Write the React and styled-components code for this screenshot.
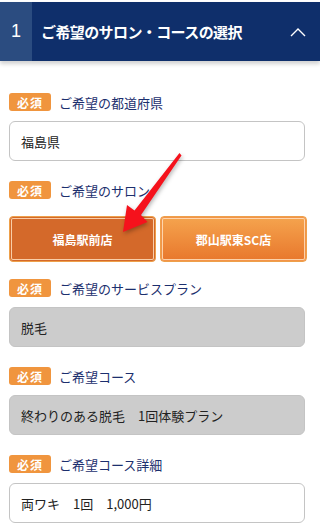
import React from "react";
import styled, { createGlobalStyle } from "styled-components";

const GlobalStyle = createGlobalStyle`
  html, body {
    margin: 0;
    padding: 0;
    background: #fff;
  }
  body {
    font-family: "Noto Sans CJK JP", "Noto Sans", sans-serif;
    width: 320px;
    overflow: hidden;
  }
`;

const Page = styled.div`
  position: relative;
  width: 320px;
  height: 529px;
  overflow: hidden;
  padding-top: 2px;
  box-sizing: border-box;
`;

const Header = styled.div`
  display: flex;
  height: 59px;
  background: #0f2f6b;
  box-shadow: 0 3px 4px rgba(0, 0, 0, 0.18);
  color: #fff;
`;

const StepNo = styled.div`
  width: 32px;
  display: flex;
  align-items: center;
  justify-content: center;
  background: #2b4c80;
  font-family: "Liberation Sans", sans-serif;
  font-size: 18px;
`;

const Title = styled.div`
  flex: 1;
  display: flex;
  align-items: center;
  padding-left: 9px;
  font-size: 15px;
  font-weight: bold;
  letter-spacing: -0.6px;
`;

const Chevron = styled.div`
  width: 40px;
  display: flex;
  align-items: center;
  justify-content: center;
  padding-right: 2px;
`;

const Form = styled.div`
  padding: 32px 15px 0 9px;
`;

const Field = styled.div`
  margin-bottom: ${(p) => (p.$tight ? "17px" : "20px")};
`;

const LabelRow = styled.div`
  display: flex;
  align-items: center;
  gap: 8px;
  height: 18px;
  margin-bottom: ${(p) => (p.$gap ? `${p.$gap}px` : "10px")};
`;

const Badge = styled.span`
  display: inline-flex;
  align-items: center;
  justify-content: center;
  width: 42px;
  height: 18px;
  border-radius: 3px;
  background: #f0953e;
  color: #fff;
  font-size: 12px;
  font-weight: bold;
  letter-spacing: 1px;
`;

const Label = styled.span`
  color: #1c2f6e;
  font-size: 13px;
`;

const Input = styled.div`
  box-sizing: border-box;
  height: 40px;
  display: flex;
  align-items: center;
  padding-left: 11px;
  border: 1px solid #c4c4c4;
  border-radius: 6px;
  background: ${(p) => (p.$disabled ? "#cccccc" : "#fff")};
  color: #222;
  font-size: 13px;
  white-space: pre;
`;

const ButtonRow = styled.div`
  display: grid;
  grid-template-columns: 1fr 1fr;
  gap: 4px;
  margin-right: -2px;
`;

const SalonButton = styled.div`
  height: 46px;
  box-sizing: border-box;
  display: flex;
  align-items: center;
  justify-content: center;
  border-radius: 4px;
  border: 1px solid #eea04a;
  background: ${(p) =>
    p.$active ? "#d4692a" : "linear-gradient(#f5a44e, #e8772c)"};
  box-shadow: inset 0 0 0 1px ${(p) => (p.$active ? "#d4692a" : "#f2944a")},
    inset 0 0 0 2px rgba(255, 225, 190, 0.85);
  color: #fff;
  font-size: 12px;
  font-weight: bold;
`;

const Arrow = styled.svg`
  position: absolute;
  left: 0;
  top: 0;
  pointer-events: none;
  filter: drop-shadow(1px 2px 2px rgba(0, 0, 0, 0.3));
`;

export default function App() {
  return (
    <Page>
      <GlobalStyle />
      <Header>
        <StepNo>1</StepNo>
        <Title>ご希望のサロン・コースの選択</Title>
        <Chevron>
          <svg width="16" height="10" viewBox="0 0 16 10">
            <path d="M1 9 L8 2 L15 9" fill="none" stroke="#fff" strokeWidth="1.4" />
          </svg>
        </Chevron>
      </Header>
      <Form>
        <Field>
          <LabelRow>
            <Badge>必須</Badge>
            <Label>ご希望の都道府県</Label>
          </LabelRow>
          <Input>福島県</Input>
        </Field>
        <Field $tight>
          <LabelRow $gap={17}>
            <Badge>必須</Badge>
            <Label>ご希望のサロン</Label>
          </LabelRow>
          <ButtonRow>
            <SalonButton $active>福島駅前店</SalonButton>
            <SalonButton>郡山駅東SC店</SalonButton>
          </ButtonRow>
        </Field>
        <Field>
          <LabelRow>
            <Badge>必須</Badge>
            <Label>ご希望のサービスプラン</Label>
          </LabelRow>
          <Input $disabled>脱毛</Input>
        </Field>
        <Field>
          <LabelRow>
            <Badge>必須</Badge>
            <Label>ご希望コース</Label>
          </LabelRow>
          <Input $disabled>終わりのある脱毛　1回体験プラン</Input>
        </Field>
        <Field>
          <LabelRow>
            <Badge>必須</Badge>
            <Label>ご希望コース詳細</Label>
          </LabelRow>
          <Input>両ワキ　1回　1,000円</Input>
        </Field>
      </Form>
      <Arrow width="320" height="529" viewBox="0 0 320 529">
        <path
          d="M179.5 153 L181.5 155.5 L141 215 L147.5 222 L123 232 L127 205 L134.5 210.5 Z"
          fill="#f5121c"
        />
      </Arrow>
    </Page>
  );
}
